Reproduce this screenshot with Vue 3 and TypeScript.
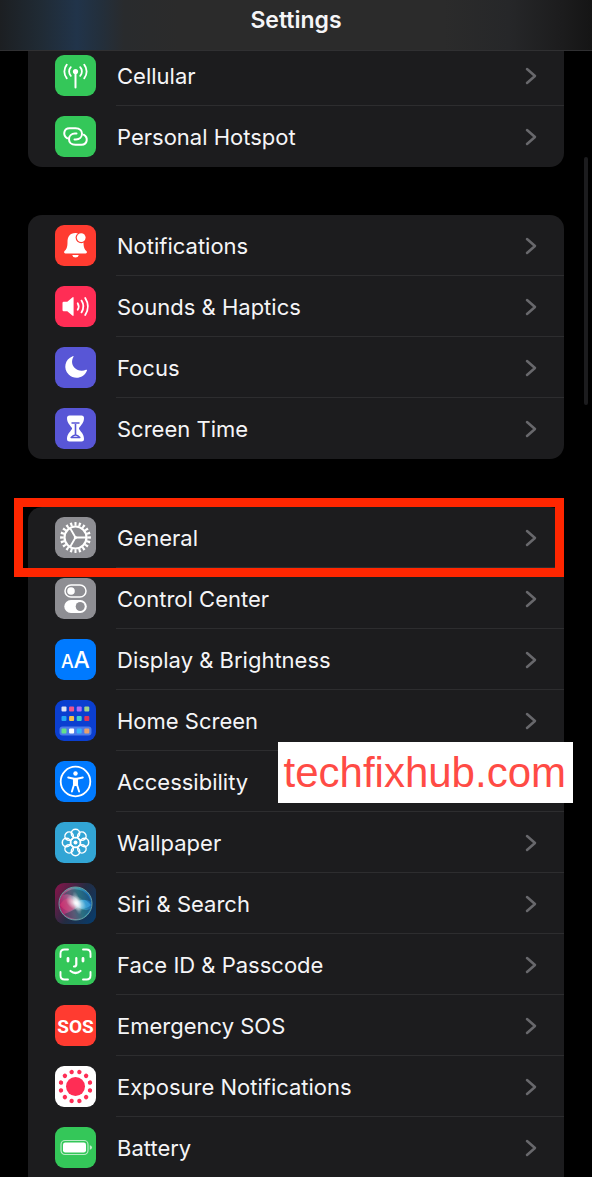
<script setup lang="ts">
interface Item {
  id: string
  label: string
  tone: string
  highlighted?: boolean
  caption?: string
}

const groups: Item[][] = [
  [
    { id: 'cellular', label: 'Cellular', tone: 'green' },
    { id: 'hotspot', label: 'Personal Hotspot', tone: 'green' },
  ],
  [
    { id: 'notifications', label: 'Notifications', tone: 'red' },
    { id: 'sounds', label: 'Sounds & Haptics', tone: 'pink' },
    { id: 'focus', label: 'Focus', tone: 'indigo' },
    { id: 'screen-time', label: 'Screen Time', tone: 'indigo' },
  ],
  [
    { id: 'general', label: 'General', tone: 'gray', highlighted: true },
    { id: 'control-center', label: 'Control Center', tone: 'gray' },
    { id: 'display', label: 'Display & Brightness', tone: 'blue' },
    { id: 'home-screen', label: 'Home Screen', tone: 'navy' },
    { id: 'accessibility', label: 'Accessibility', tone: 'blue', caption: 'techfixhub.com' },
    { id: 'wallpaper', label: 'Wallpaper', tone: 'cyan' },
    { id: 'siri', label: 'Siri & Search', tone: 'dark' },
    { id: 'face-id', label: 'Face ID & Passcode', tone: 'green' },
    { id: 'sos', label: 'Emergency SOS', tone: 'red' },
    { id: 'exposure', label: 'Exposure Notifications', tone: 'white' },
    { id: 'battery', label: 'Battery', tone: 'green' },
  ],
]

const apps = [
  ['#dfe3f5', '#f0568c', '#b06cf5', '#9fd48a'],
  ['#23a6f5', '#f2c14e', '#3fd0c9', '#e0335a'],
]
const dock = ['#63e08a', '#ffffff', '#35b5f7', '#e8a06c']
const petals = [0, 45, 90, 135, 180, 225, 270, 315]
const dots = Array.from({ length: 12 }, (_, i) => 15 + i * 30)
</script>

<template>
  <div class="screen">
    <header class="bar">
      <h1>Settings</h1>
    </header>

    <main class="content">
      <nav v-for="(group, g) in groups" :key="g" class="group">
        <div v-for="item in group" :key="item.id" class="row">
          <a class="link" :href="'#' + item.id">
            <svg class="icon" :class="item.tone" viewBox="0 0 41 41" aria-hidden="true">
              <g v-if="item.id === 'cellular'" class="line" stroke-width="1.8">
                <circle cx="20.5" cy="16.5" r="2.6" fill="#fff" stroke="none" />
                <path d="M20.5 17v15.5" stroke-width="2" />
                <path d="M15.8 12.2a6.3 6.3 0 0 0 0 8.6M25.2 12.2a6.3 6.3 0 0 1 0 8.6M11.8 9.6a11 11 0 0 0 0 13.8M29.2 9.6a11 11 0 0 1 0 13.8" />
              </g>
              <g v-else-if="item.id === 'hotspot'" class="line" stroke-width="2">
                <path d="M12.300 22.300C7.500 19.500 8.500 12.300 14.500 12.300H20.500C25 12.300 27 15 27 17.800C27 21 24.500 23.400 21 23.400H19.500" />
                <path d="M28.700 18.700C33.500 21.500 32.500 28.700 26.500 28.700H20.500C16 28.700 14 26 14 23.200C14 20 16.500 17.600 20 17.600H21.500" />
              </g>
              <g v-else-if="item.id === 'notifications'">
                <path fill="#fff" d="M20.5 8c-6 0-8 4-8 9 0 6-1.3 7.5-3.1 9.2-.7.8-.3 2.2 1 2.2h20.2c1.3 0 1.7-1.4 1-2.2-1.8-1.7-3.1-3.2-3.1-9.2 0-5-2-9-8-9zM17.200 30h6.600a3.400 3.400 0 0 1-6.600 0z" />
                <circle cx="26.2" cy="12.6" r="5.6" fill="#ff3b30" />
                <circle cx="26.2" cy="12.6" r="4.4" fill="#fff" />
              </g>
              <g v-else-if="item.id === 'sounds'">
                <path fill="#fff" d="M7.5 17q0-1.200 1.200-1.200h3.600l5-4.400q1.300-1 1.300.6v17q0 1.600-1.300.6l-5-4.400H8.700q-1.200 0-1.200-1.200z" />
                <path class="line" stroke-width="1.8" d="M22.700 17.200q2 3.300 0 6.600M26.500 14.600q3.800 5.900 0 11.800M30.200 12q5.400 8.500 0 17" />
              </g>
              <path v-else-if="item.id === 'focus'" fill="#fff" d="M17.700 9.200c-8 3-9.800 12.600-4 18.300 6 5.800 15.400 3.300 18.200-3.800.3-.8-.2-1.200-.9-.9-4.100 1.700-8.600.9-11.500-2.100-2.800-2.900-3.200-7-1.100-10.600.4-.7 0-1.200-.7-.9z" />
              <g v-else-if="item.id === 'screen-time'">
                <path fill="#fff" d="M12 10q0-2.500 2.500-2.500h12q2.500 0 2.500 2.500c0 5-3 7-5 10v1c2 3 5 5 5 10q0 2.500-2.500 2.500h-12Q12 33.500 12 31c0-5 3-7 5-10v-1c-2-3-5-5-5-10z" />
                <path fill="none" stroke="#5856d6" stroke-width="1.600" stroke-linejoin="round" d="M16.500 15h8M20.500 16v11M16.200 29.500q4.300-5 8.600 0z" />
              </g>
              <g v-else-if="item.id === 'general'" fill="none" stroke="#fff">
                <circle cx="20.5" cy="20.5" r="13.600" stroke-width="3.600" pathLength="40" stroke-dasharray="1 1" stroke-dashoffset="0.5" />
                <circle cx="20.5" cy="20.5" r="11" stroke-width="2.200" />
                <path stroke-width="1.800" d="M31 20.500H20.500L15.300 11.500M20.500 20.500l-5.200 9" />
                <circle cx="20.5" cy="20.5" r="1.6" fill="#fff" stroke="none" />
              </g>
              <g v-else-if="item.id === 'control-center'">
                <rect x="10" y="7" width="21" height="12" rx="6" fill="none" stroke="#fff" stroke-width="1.5" />
                <circle cx="16" cy="13" r="3.8" fill="#fff" />
                <rect x="9.300" y="22" width="22.500" height="13" rx="6.500" fill="#fff" />
                <circle cx="25.200" cy="28.500" r="4.500" fill="#8e8e93" />
              </g>
              <g v-else-if="item.id === 'display'" class="glyph">
                <text x="6" y="28.500" font-size="18">A</text>
                <text x="18.500" y="28.500" font-size="23">A</text>
              </g>
              <g v-else-if="item.id === 'home-screen'">
                <template v-for="(line, r) in apps" :key="r">
                  <rect v-for="(color, c) in line" :key="color" :x="6.5 + c * 7.6" :y="6.5 + r * 9.5" width="5" height="5" rx="1" :fill="color" />
                </template>
                <rect x="4.500" y="26.500" width="32" height="9" rx="3" fill="#4c7bea" />
                <rect v-for="(color, c) in dock" :key="color" :x="6.5 + c * 7.6" y="28.500" width="5" height="5" rx="1" :fill="color" />
              </g>
              <g v-else-if="item.id === 'accessibility'">
                <circle cx="20.500" cy="20.500" r="14.800" fill="none" stroke="#fff" stroke-width="1.800" />
                <circle cx="20.500" cy="12.500" r="2.200" fill="#fff" />
                <path class="line" stroke-width="1.900" d="M13.200 16.500l5.800 1.300h3l5.800-1.300M18.900 18v6l-2 6.500M22.100 18v6l2 6.500" />
                <path fill="#fff" d="M18 17.500h5V25h-5z" />
              </g>
              <g v-else-if="item.id === 'wallpaper'" fill="none" stroke="#fff" stroke-width="1.500">
                <circle v-for="angle in petals" :key="angle" cx="20.5" cy="11.5" r="4.200" :transform="`rotate(${angle} 20.5 20.5)`" />
                <circle cx="20.5" cy="20.5" r="5" />
                <circle cx="20.5" cy="20.5" r="2" fill="#fff" stroke="none" />
              </g>
              <g v-else-if="item.id === 'siri'">
                <defs>
                  <linearGradient id="siri-back" x1="0" y1="0.2" x2="1" y2="0.8">
                    <stop offset="0" stop-color="#7c1749" />
                    <stop offset="0.5" stop-color="#242c42" />
                    <stop offset="1" stop-color="#093b69" />
                  </linearGradient>
                  <linearGradient id="siri-orb" x1="0" y1="0.6" x2="1" y2="0.4">
                    <stop offset="0" stop-color="#b01863" />
                    <stop offset="0.4" stop-color="#9b7397" />
                    <stop offset="0.65" stop-color="#3d9fae" />
                    <stop offset="1" stop-color="#1463b8" />
                  </linearGradient>
                  <radialGradient id="siri-glow">
                    <stop offset="0" stop-color="#fff" />
                    <stop offset="0.3" stop-color="#fff" stop-opacity="0.7" />
                    <stop offset="1" stop-color="#fff" stop-opacity="0" />
                  </radialGradient>
                </defs>
                <rect width="41" height="41" fill="url(#siri-back)" />
                <circle cx="20.5" cy="20.5" r="16.5" fill="url(#siri-orb)" stroke="#659ea0" />
                <path fill="#183f53" opacity="0.5" d="M8 12Q16 3 28 8q7 5 8 11-6-4-12-1Q16 9 8 12zM9 31q9-3 14-7 7 5 12 2-5 11-15 10-7-1-11-5z" />
                <path fill="#ef3f78" opacity="0.4" d="M5 22q7-13 18-1-9 13-18 1z" />
                <path fill="#48b6f4" opacity="0.5" d="M19 21q9-9 17 1-9 8-17-1z" />
                <ellipse cx="21" cy="20" rx="11" ry="7" fill="url(#siri-glow)" transform="rotate(30 21 20)" />
                <ellipse cx="22" cy="20" rx="4" ry="12" fill="url(#siri-glow)" opacity="0.7" transform="rotate(-15 22 20)" />
              </g>
              <g v-else-if="item.id === 'face-id'" class="line" stroke-width="1.900">
                <path d="M5.500 13V9.500q0-4 4-4H13M28 5.500h3.500q4 0 4 4V13M5.500 28v3.500q0 4 4 4H13M28 35.500h3.500q4 0 4-4V28" />
                <path stroke-width="2.800" d="M13 14.500v2.500M28 14.500v2.500" />
                <path stroke-width="2.200" d="M21.300 14v6.500q0 2-2.300 2M15.500 27q5 4 10 0" />
              </g>
              <text v-else-if="item.id === 'sos'" class="sos" x="20.5" y="27.500" font-size="19">SOS</text>
              <g v-else-if="item.id === 'exposure'" fill="#ff2d55">
                <circle cx="20.500" cy="20.500" r="9.500" />
                <circle v-for="angle in dots" :key="angle" cx="20.500" cy="5.500" r="2.200" :transform="`rotate(${angle} 20.5 20.5)`" />
              </g>
              <g v-else>
                <rect x="6" y="13.500" width="27" height="14" rx="4" fill="none" stroke="#fff" stroke-opacity="0.65" stroke-width="1.200" />
                <rect x="8" y="15.500" width="23" height="10" rx="2.200" fill="#fff" />
                <path fill="#fff" fill-opacity="0.7" d="M34.800 18.300q2.200.5 2.200 2.200t-2.200 2.200z" />
              </g>
            </svg>
            <span class="label">{{ item.label }}</span>
            <svg class="chevron" viewBox="0 0 12 18" aria-hidden="true">
              <path d="M2 2l8 7-8 7" />
            </svg>
          </a>
          <span v-if="item.highlighted" class="highlight"></span>
          <span v-if="item.caption" class="caption">{{ item.caption }}</span>
        </div>
      </nav>
    </main>
    <span class="scrollbar"></span>
  </div>
</template>

<style>
body {
  background: #000;
}
</style>

<style scoped>
.screen {
  position: relative;
  height: 100vh;
  overflow: hidden;
  background: #000;
  color: #f5f5f7;
  font-family: Inter, Roboto, "Liberation Sans", sans-serif;
}

.bar {
  position: absolute;
  inset: 0 0 auto;
  z-index: 2;
  display: flex;
  align-items: center;
  justify-content: center;
  box-sizing: border-box;
  height: 51px;
  padding-bottom: 10px;
  border-bottom: 1px solid #303032;
  background: linear-gradient(90deg, #1c1f22 0%, #202b35 7%, #21344a 13%, #232f3c 17%, #292b2d 21%, #2b2b2b 30%, #2b2b2b 75%, #262729 86%, #1c1c1d 95%, #151515 100%);
}

h1 {
  margin: 0;
  font-size: 23px;
  line-height: 28px;
  font-weight: 600;
}

.content {
  display: flex;
  flex-direction: column;
  gap: 48px;
  padding: 45px 28px 0;
}

.group {
  border-radius: 14px;
  background: #1c1c1e;
}

.group:first-child {
  border-radius: 0 0 14px 14px;
}

.group:last-child {
  border-radius: 14px 14px 0 0;
}

.row {
  position: relative;
}

.link {
  display: flex;
  align-items: center;
  gap: 21px;
  height: 61px;
  padding: 0 27px;
  color: inherit;
  text-decoration: none;
}

.row:not(:last-child)::after,
.group:last-child .row::after {
  content: "";
  position: absolute;
  right: 0;
  bottom: 0;
  left: 88px;
  height: 1px;
  background: #2d2d2f;
}

.icon {
  flex: none;
  width: 41px;
  height: 41px;
  border-radius: 9px;
}

.green { background: #34c759; }
.red { background: #ff3b30; }
.pink { background: #ff2d55; }
.indigo { background: #5856d6; }
.gray { background: #8e8e93; }
.blue { background: #007aff; }
.navy { background: #0b3fd0; }
.cyan { background: #32a5d5; }
.dark { background: #20283c; }
.white { background: #fff; }

.line {
  fill: none;
  stroke: #fff;
  stroke-linecap: round;
  stroke-linejoin: round;
}

.glyph {
  fill: #fff;
  font-family: Inter, sans-serif;
  font-weight: 500;
}

.sos {
  fill: #fff;
  font-family: "Liberation Sans Narrow", Roboto, sans-serif;
  font-weight: 700;
  text-anchor: middle;
}

.label {
  flex: 1;
  font-size: 22px;
  line-height: 30px;
  white-space: nowrap;
}

.chevron {
  flex: none;
  width: 12px;
  height: 18px;
  fill: none;
  stroke: #68686c;
  stroke-width: 2.5;
  stroke-linecap: round;
  stroke-linejoin: round;
}

.highlight {
  position: absolute;
  z-index: 1;
  inset: -9px 0 -9px -14px;
  border: 9px solid #ff2600;
  pointer-events: none;
}

.caption {
  position: absolute;
  z-index: 1;
  top: -9px;
  right: -9px;
  padding: 0 7px 0 6px;
  background: #fff;
  color: #ff4b45;
  font-family: "Liberation Sans", Arial, sans-serif;
  font-size: 42px;
  line-height: 61px;
}

.scrollbar {
  position: absolute;
  top: 157px;
  right: 4px;
  width: 4px;
  height: 248px;
  border-radius: 2px;
  background: #1c1c1e;
}
</style>
